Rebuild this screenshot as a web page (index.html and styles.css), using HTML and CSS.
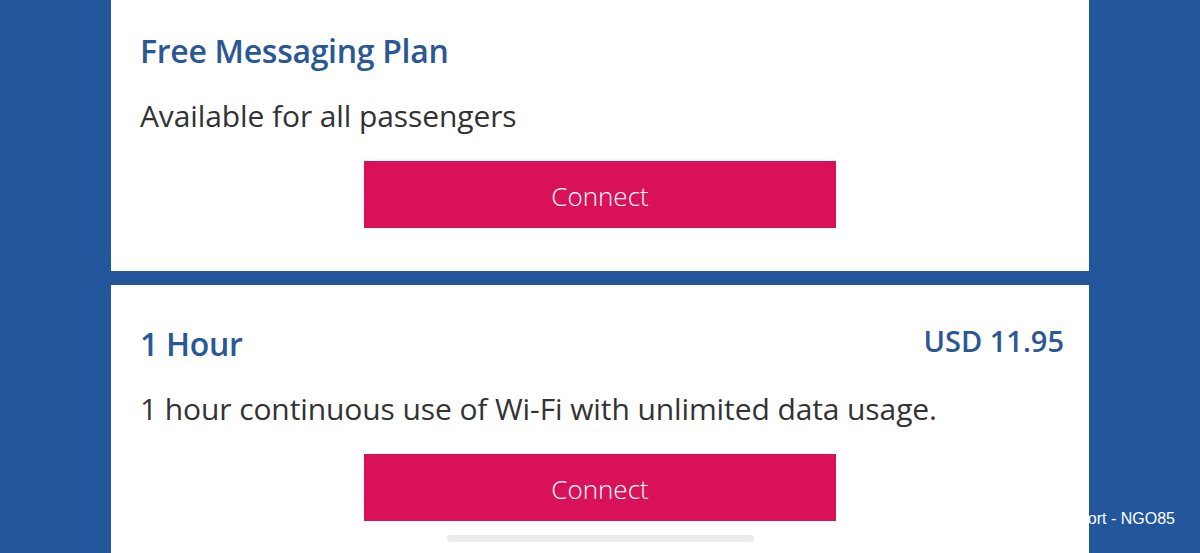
FILE: index.html
```html
<!DOCTYPE html>
<html lang="en">
<head>
<meta charset="utf-8">
<title>Wi-Fi Plans</title>
<link rel="stylesheet" href="styles.css">
</head>
<body>
<div class="page">
  <main class="plans">
    <section class="plan">
      <div class="plan-head">
        <h2 class="plan-name">Free Messaging Plan</h2>
      </div>
      <p class="plan-desc">Available for all passengers</p>
      <button class="connect">Connect</button>
    </section>
    <section class="plan">
      <div class="plan-head">
        <h2 class="plan-name">1 Hour</h2>
        <span class="plan-price">USD 11.95</span>
      </div>
      <p class="plan-desc">1 hour continuous use of Wi-Fi with unlimited data usage.</p>
      <button class="connect">Connect</button>
    </section>
  </main>
  <div class="location">Chubu Centrair International Airport - NGO85</div>
  <div class="scroll-thumb"></div>
</div>
</body>
</html>
```
FILE: styles.css
```css
html, body {
  margin: 0;
  padding: 0;
  height: 100%;
  overflow: hidden;
}
body {
  background: #23569b;
  font-family: "Open Sans", "Noto Sans", sans-serif;
}
.page {
  position: relative;
  display: flow-root;
  height: 553px;
}
.plans {
  position: relative;
  z-index: 2;
  width: 978px;
  margin: -8px auto 0;
  display: flex;
  flex-direction: column;
  gap: 14px;
}
.plan {
  background: #fff;
  padding: 0 25px 43px 29px;
  display: flex;
  flex-direction: column;
}
.plan-head {
  display: flex;
  justify-content: space-between;
  align-items: flex-start;
}
.plan-name {
  margin: 0;
  padding-top: 39px;
  font-size: 32px;
  font-weight: 600;
  line-height: 40px;
  color: #2a5894;
  letter-spacing: -0.3px;
}
.plan-price {
  margin-top: 36px;
  font-size: 29px;
  font-weight: 600;
  line-height: 40px;
  color: #2a5894;
}
.plan-desc {
  margin: 25px 0 0;
  font-size: 30px;
  line-height: 40px;
  color: #333;
  letter-spacing: -0.1px;
}
.connect {
  align-self: center;
  margin: 25px 0 0 -4px;
  width: 472px;
  height: 67px;
  padding: 3px 0 0;
  border: 0;
  background: #d81159;
  color: #fff;
  font-family: "Open Sans", "Noto Sans", sans-serif;
  font-size: 26px;
  font-weight: 300;
  cursor: pointer;
}
.location {
  position: absolute;
  z-index: 1;
  right: 25px;
  top: 510px;
  font-family: "Liberation Sans", Arial, sans-serif;
  font-size: 16px;
  color: #fff;
  white-space: nowrap;
}
.scroll-thumb {
  position: absolute;
  z-index: 3;
  left: 447px;
  top: 535px;
  width: 307px;
  height: 7px;
  border-radius: 4px;
  background: #ebebeb;
}
```
